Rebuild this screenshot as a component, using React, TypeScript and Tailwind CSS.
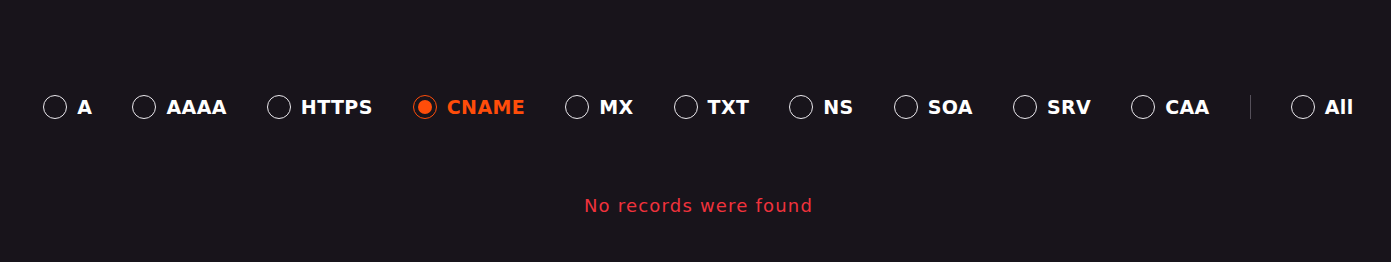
import { useState } from 'react'

const TYPES = ['A', 'AAAA', 'HTTPS', 'CNAME', 'MX', 'TXT', 'NS', 'SOA', 'SRV', 'CAA']

function Radio({ label, checked, onClick }: { label: string; checked: boolean; onClick: () => void }) {
  return (
    <button type="button" onClick={onClick} className="flex items-center gap-2.5">
      <span
        className={`flex h-6 w-6 items-center justify-center rounded-full border-[1.5px] ${
          checked ? 'border-[#ff4d0a]' : 'border-[#ebe9ee]'
        }`}
      >
        {checked && <span className="h-3.5 w-3.5 rounded-full bg-[#ff4d0a]" />}
      </span>
      <span
        className={`text-[19px] font-bold leading-6 tracking-[0.4px] ${
          checked ? 'text-[#ff4d0a]' : 'text-white'
        }`}
      >
        {label}
      </span>
    </button>
  )
}

export default function App() {
  const [selected, setSelected] = useState('CNAME')

  return (
    <div className="min-h-screen bg-[#18141b] pl-1.5 pt-[95px] font-['DejaVu_Sans',sans-serif]">
      <div className="flex items-center justify-center gap-10">
        {TYPES.map((t) => (
          <Radio key={t} label={t} checked={selected === t} onClick={() => setSelected(t)} />
        ))}
        <div className="h-6 w-px bg-[#55505a]" />
        <Radio label="All" checked={selected === 'All'} onClick={() => setSelected('All')} />
      </div>

      <p className="mt-[75px] text-center text-[18px] leading-6 tracking-[1.2px] text-[#f0323c]">
        No records were found
      </p>
    </div>
  )
}
